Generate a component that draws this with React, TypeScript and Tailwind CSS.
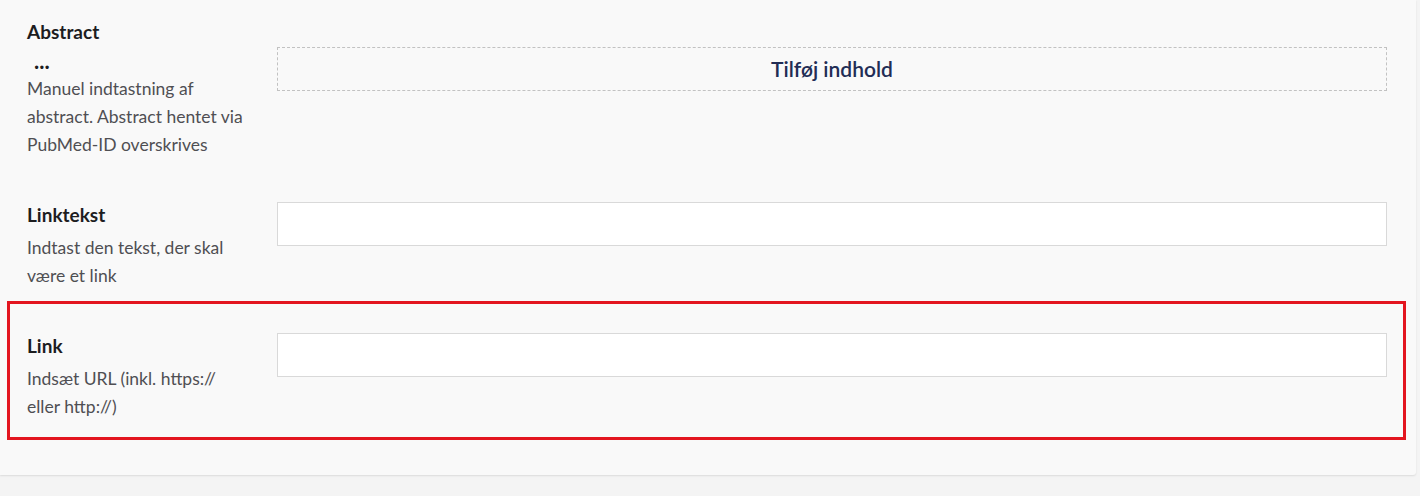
import React from "react";

const font = { fontFamily: "Lato, 'Noto Sans', sans-serif" };

function Label({ title, children }: { title: string; children?: React.ReactNode }) {
  return (
    <div className="w-[250px] shrink-0 pr-[28px]">
      <div className="text-[19px] leading-[26px] font-bold text-[#1d1d1f]">{title}</div>
      {children}
    </div>
  );
}

export default function App() {
  return (
    <div className="w-[1420px] h-[496px] bg-[#f4f4f4] overflow-hidden" style={font}>
      <div className="w-[1416px] bg-[#f9f9f9] pt-[19px] pb-[35px] rounded-br-[3px] shadow-[0_1px_2px_rgba(0,0,0,0.10)]">
        {/* Abstract */}
        <div className="flex pl-[27px] pr-[29px]">
          <Label title="Abstract">
            <div className="mt-[2px] pl-[7px] text-[22px] leading-[28px] font-bold text-[#1d1d1f]">...</div>
            <div className="text-[17.5px] leading-[28px] text-[#4f4f53]">
              Manuel indtastning af abstract. Abstract hentet via PubMed-ID overskrives
            </div>
          </Label>
          <div className="flex-1 mt-[28px]">
            <button className="w-full h-[44px] border border-dashed border-[#c2c2c2] flex items-center justify-center text-[21px] font-semibold text-[#222d55]">
              Tilføj indhold
            </button>
          </div>
        </div>

        {/* Linktekst */}
        <div className="flex pl-[27px] pr-[29px] mt-[43px]">
          <Label title="Linktekst">
            <div className="mt-[6px] text-[17.5px] leading-[28px] text-[#4f4f53]">
              Indtast den tekst, der skal være et link
            </div>
          </Label>
          <div className="flex-1">
            <input type="text" className="w-full h-[44px] bg-white border border-[#d9d9d9] outline-none px-3" />
          </div>
        </div>

        {/* Link */}
        <div className="mx-[7px] mt-[11px] w-[1399px] border-[3px] border-[#e3151f] flex pl-[17px] pr-[16px] pt-[29px] pb-[16px]">
          <Label title="Link">
            <div className="mt-[6px] text-[17.5px] leading-[28px] text-[#4f4f53]">
              Indsæt URL (inkl. https:// eller http://)
            </div>
          </Label>
          <div className="flex-1">
            <input type="text" className="w-full h-[44px] bg-white border border-[#d9d9d9] outline-none px-3" />
          </div>
        </div>
      </div>
    </div>
  );
}
